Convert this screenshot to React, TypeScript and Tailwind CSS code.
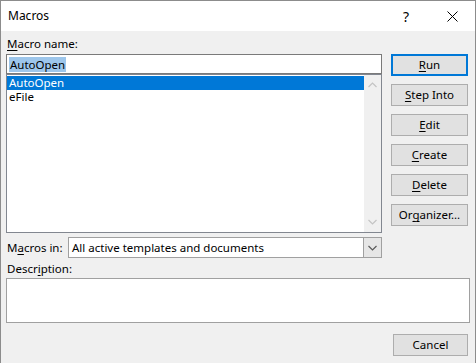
import React from "react";

const font = { fontFamily: '"Noto Sans", "Segoe UI", sans-serif' };

const Key: React.FC<{ pre?: string; k: string; post?: string }> = ({ pre = "", k, post = "" }) => (
  <span>
    {pre}
    <span className="underline underline-offset-[2px] decoration-1">{k}</span>
    {post}
  </span>
);

const DlgButton: React.FC<{ children: React.ReactNode; primary?: boolean }> = ({ children, primary }) => (
  <button
    className={
      primary
        ? "h-[22px] w-[77px] bg-[#e1e1e1] border-2 border-[#0078d7] text-[11.5px] leading-none text-black flex items-center justify-center"
        : "h-[22px] w-[77px] bg-[#e1e1e1] border border-[#adadad] text-[11.5px] leading-none text-black flex items-center justify-center"
    }
  >
    {children}
  </button>
);

const Chevron: React.FC<{ up?: boolean; color?: string }> = ({ up, color = "#c4c4c4" }) => (
  <svg width="9" height="6" viewBox="0 0 9 6">
    <path d={up ? "M0.5 5 L4.5 1 L8.5 5" : "M0.5 1 L4.5 5 L8.5 1"} fill="none" stroke={color} strokeWidth="1.2" />
  </svg>
);

const macros = ["AutoOpen", "eFile"];

export default function App() {
  return (
    <div
      style={font}
      className="w-[476px] h-[363px] bg-[#f0f0f0] border-t border-l border-r border-[#8c8c8c] flex flex-col text-black text-[11.5px] overflow-hidden"
    >
      {/* title bar */}
      <div className="h-[30px] bg-white flex items-center shrink-0">
        <div className="pl-[7px] flex-1 text-[12px]">Macros</div>
        <div className="w-[46px] h-full flex items-center justify-center text-[14px]">?</div>
        <div className="w-[46px] h-full flex items-center justify-center">
          <svg width="11" height="11" viewBox="0 0 11 11">
            <path d="M0.5 0.5 L10.5 10.5 M10.5 0.5 L0.5 10.5" stroke="#000" strokeWidth="1" />
          </svg>
        </div>
      </div>

      <div className="flex flex-col px-[5px]">
        <div className="flex">
          {/* left column */}
          <div className="w-[376px] flex flex-col">
            <div className="pt-[5px] h-[21px] leading-[16px] pl-[1px]">
              <Key k="M" post="acro name:" />
            </div>
            <div className="mt-[2px] h-[20px] border border-[#7a7a7a] bg-white flex items-center pl-[2px]">
              <span className="bg-[#9dc6eb] leading-[15px] px-[1px]">AutoOpen</span>
            </div>
            <div className="h-[159px] border border-[#828790] bg-white flex">
              <div className="flex-1">
                {macros.map((m, i) => (
                  <div
                    key={m}
                    className={
                      i === 0
                        ? "h-[14px] leading-[14px] bg-[#0078d7] text-white pl-[2px] mt-[1px]"
                        : "h-[14px] leading-[14px] pl-[2px]"
                    }
                  >
                    {m}
                  </div>
                ))}
              </div>
              <div className="w-[17px] bg-[#f0f0f0] flex flex-col items-center justify-between py-[7px]">
                <Chevron up />
                <Chevron />
              </div>
            </div>
            <div className="mt-[4px] h-[21px] flex items-center">
              <div className="w-[62px] pl-[1px]">
                <Key pre="M" k="a" post="cros in:" />
              </div>
              <div className="flex-1 h-full border border-[#a0a0a0] bg-white flex">
                <div className="flex-1 flex items-center pl-[3px]">All active templates and documents</div>
                <div className="w-[18px] border-l border-[#a0a0a0] bg-[#e6e6e6] flex items-center justify-center">
                  <Chevron color="#5a5a5a" />
                </div>
              </div>
            </div>
          </div>

          {/* right column */}
          <div className="ml-[9px] pt-[23px] flex flex-col gap-[8px]">
            <DlgButton primary>
              <Key k="R" post="un" />
            </DlgButton>
            <DlgButton>
              <Key k="S" post="tep Into" />
            </DlgButton>
            <DlgButton>
              <Key k="E" post="dit" />
            </DlgButton>
            <DlgButton>
              <Key k="C" post="reate" />
            </DlgButton>
            <DlgButton>
              <Key k="D" post="elete" />
            </DlgButton>
            <DlgButton>
              <Key pre="Or" k="g" post="anizer..." />
            </DlgButton>
          </div>
        </div>

        <div className="mt-[3px] h-[16px] leading-[16px] pl-[1px]">
          <Key pre="Descr" k="i" post="ption:" />
        </div>
        <div className="mt-[1px] w-[464px] h-[45px] border border-[#a0a0a0] bg-white" />

        <div className="mt-[11px] flex justify-end pr-[2px]">
          <button className="h-[22px] w-[75px] bg-[#e1e1e1] border border-[#adadad] text-[11.5px] leading-none">
            Cancel
          </button>
        </div>
      </div>
    </div>
  );
}
